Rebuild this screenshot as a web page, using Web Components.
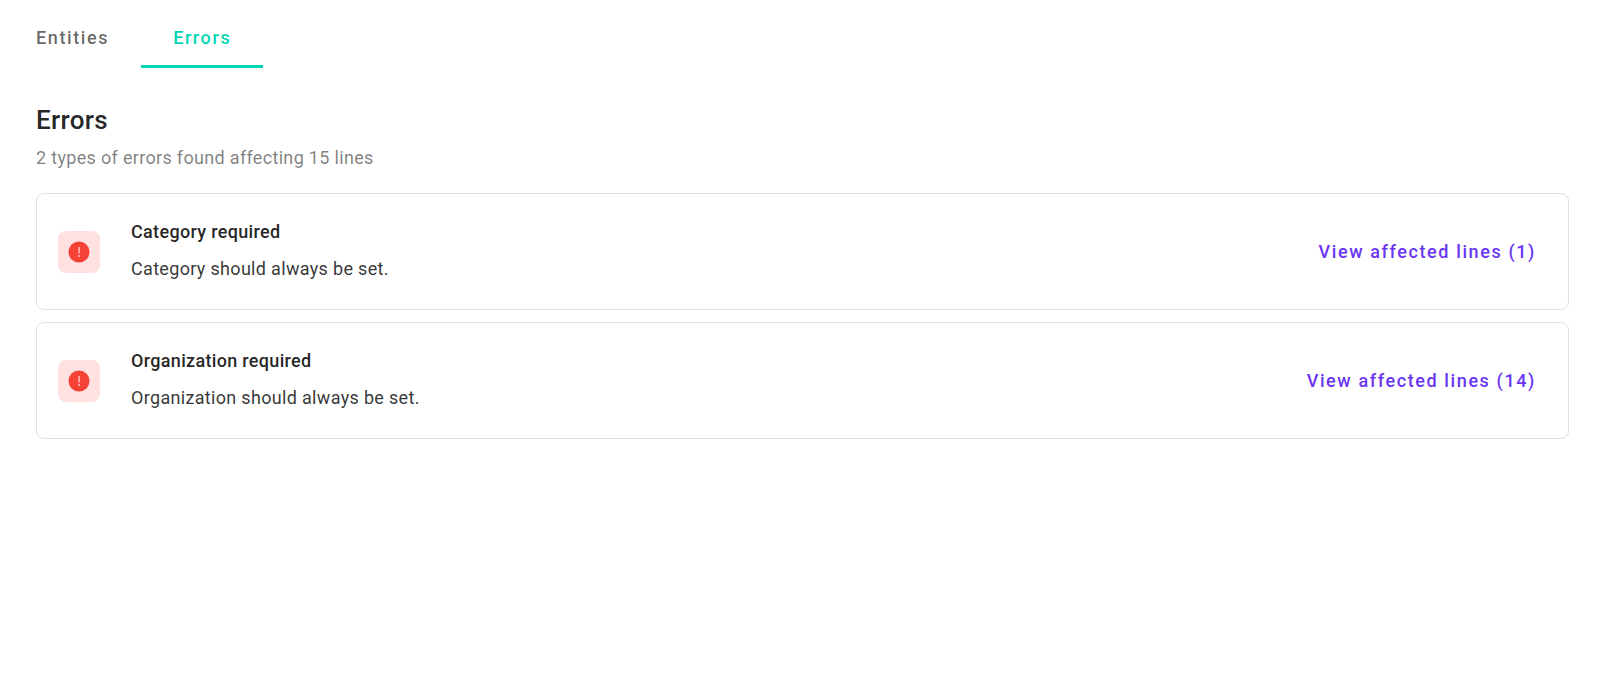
<!DOCTYPE html>
<html lang="en">
<head>
<meta charset="utf-8">
<meta name="viewport" content="width=device-width, initial-scale=1">
<title>Errors</title>
<style>
  body { margin: 0; background: #fff; color: rgba(0,0,0,.87); font: 400 18px/28px Roboto, sans-serif; }
</style>
</head>
<body>
<errors-page></errors-page>

<template id="page-template">
  <style>
    :host { display: block; padding: 8px 38px 36px 36px; }
    nav { display: flex; margin-left: -32px; }
    h1 { margin: 32px 0 0; font-size: 26px; font-weight: 500; line-height: 40px; letter-spacing: .0125em; }
    .summary { margin: 4px 0 21px; color: rgba(0,0,0,.5); letter-spacing: .0178571em; line-height: 28px; }
    .list { display: grid; gap: 12px; }
  </style>
  <nav aria-label="Import result">
    <nav-tab>Entities</nav-tab>
    <nav-tab active>Errors</nav-tab>
  </nav>
  <main>
    <h1>Errors</h1>
    <p class="summary">2 types of errors found affecting 15 lines</p>
    <div class="list">
      <error-card><span slot="title">Category required</span>Category should always be set.<span slot="action">View affected lines (1)</span></error-card>
      <error-card><span slot="title">Organization required</span>Organization should always be set.<span slot="action">View affected lines (14)</span></error-card>
    </div>
  </main>
</template>

<template id="tab-template">
  <style>
    :host { display: block; }
    a { display: block; box-sizing: border-box; height: 60px; padding: 0 32px; border-bottom: 3px solid transparent; color: rgba(0,0,0,.6); font-weight: 500; line-height: 60px; letter-spacing: .0892857em; text-decoration: none; }
    :host([active]) a { color: #00d7b0; border-color: #00d7b0; }
  </style>
  <a href="#"><slot></slot></a>
</template>

<template id="card-template">
  <style>
    :host { display: flex; align-items: center; box-sizing: border-box; min-height: 117px; padding: 0 21px; border: 1px solid #e0e0e0; border-radius: 8px; }
    .icon { display: grid; place-items: center; flex: none; width: 42px; height: 42px; margin-right: 31px; border-radius: 8px; background: #ffe1e1; }
    svg { display: block; }
    .text { flex: 1; min-width: 0; padding-bottom: 2px; }
    h2, p { margin: 0; font-size: 18px; line-height: 28px; letter-spacing: .0178571em; }
    h2 { font-weight: 500; }
    p { margin-top: 9px; color: rgba(0,0,0,.8); }
    button { padding: 8px 11px; border: 0; background: none; color: #6a35f2; font: inherit; font-weight: 500; letter-spacing: .0892857em; cursor: pointer; }
  </style>
  <div class="icon">
    <svg width="26" height="26" viewBox="0 0 26 26" aria-hidden="true">
      <circle cx="13" cy="13" r="10.5" fill="#f44336"/>
      <path d="M12.2 8h1.8v6.4h-1.8zM12.2 16h1.8v2h-1.8z" fill="#ffa8a0"/>
    </svg>
  </div>
  <div class="text">
    <h2><slot name="title"></slot></h2>
    <p><slot></slot></p>
  </div>
  <button type="button"><slot name="action"></slot></button>
</template>

<script>
  class TemplateElement extends HTMLElement {
    constructor() {
      super();
      const template = document.getElementById(this.constructor.template);
      this.attachShadow({ mode: "open" }).append(template.content.cloneNode(true));
    }
  }
  class NavTab extends TemplateElement {
    static template = "tab-template";
    connectedCallback() {
      if (this.hasAttribute("active")) this.shadowRoot.querySelector("a").setAttribute("aria-current", "page");
    }
  }
  class ErrorCard extends TemplateElement { static template = "card-template"; }
  class ErrorsPage extends TemplateElement { static template = "page-template"; }
  customElements.define("nav-tab", NavTab);
  customElements.define("error-card", ErrorCard);
  customElements.define("errors-page", ErrorsPage);
</script>
</body>
</html>
